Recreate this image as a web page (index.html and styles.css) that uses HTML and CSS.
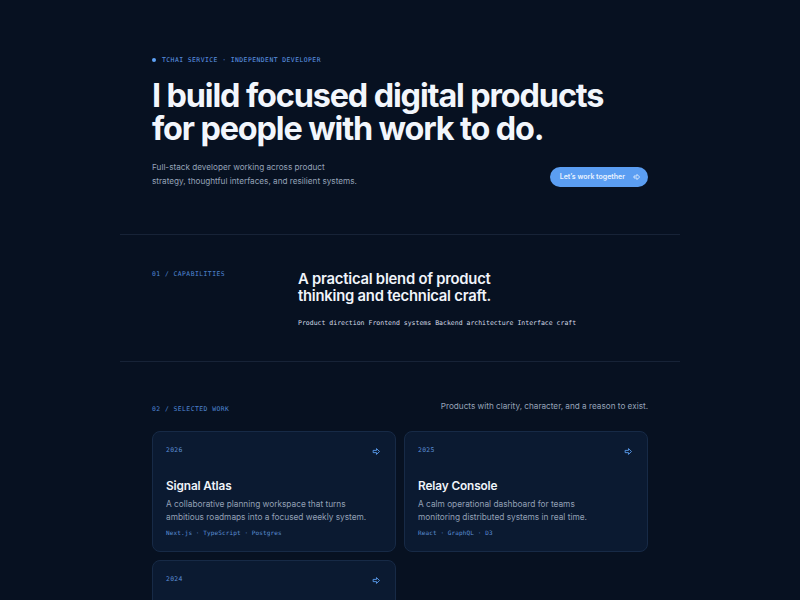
FILE: index.html
```html
<!DOCTYPE html>
<html lang="en">
<head>
<meta charset="utf-8">
<title>Tchai Service</title>
<link rel="stylesheet" href="styles.css">
</head>
<body>
<main class="page">
  <section class="hero">
    <div class="eyebrow"><span class="dot"></span>TCHAI SERVICE · INDEPENDENT DEVELOPER</div>
    <h1 class="headline">I build focused digital products<br>for people with work to do.</h1>
    <div class="hero-row">
      <p class="lede">Full-stack developer working across product<br>strategy, thoughtful interfaces, and resilient systems.</p>
      <a class="cta" href="#">Let’s work together
        <svg class="arrow" viewBox="0 0 16 16"><path d="M2 6h6V2.8L13.2 8 8 13.2V10H2z"/></svg>
      </a>
    </div>
  </section>

  <section class="caps">
    <div class="label">01 / CAPABILITIES</div>
    <div class="caps-body">
      <h2 class="caps-title">A practical blend of product<br>thinking and technical craft.</h2>
      <ul class="tags">
        <li>Product direction</li>
        <li>Frontend systems</li>
        <li>Backend architecture</li>
        <li>Interface craft</li>
      </ul>
    </div>
  </section>

  <section class="work">
    <div class="work-head">
      <div class="label">02 / SELECTED WORK</div>
      <p class="work-note">Products with clarity, character, and a reason to exist.</p>
    </div>
    <div class="cards">
      <article class="card">
        <div class="card-top"><span class="year">2026</span><svg class="arrow card-arrow" viewBox="0 0 16 16"><path d="M2 6h6V2.8L13.2 8 8 13.2V10H2z"/></svg></div>
        <h3 class="card-title">Signal Atlas</h3>
        <p class="card-desc">A collaborative planning workspace that turns ambitious roadmaps into a focused weekly system.</p>
        <div class="stack">Next.js · TypeScript · Postgres</div>
      </article>
      <article class="card">
        <div class="card-top"><span class="year">2025</span><svg class="arrow card-arrow" viewBox="0 0 16 16"><path d="M2 6h6V2.8L13.2 8 8 13.2V10H2z"/></svg></div>
        <h3 class="card-title">Relay Console</h3>
        <p class="card-desc">A calm operational dashboard for teams monitoring distributed systems in real time.</p>
        <div class="stack">React · GraphQL · D3</div>
      </article>
      <article class="card">
        <div class="card-top"><span class="year">2024</span><svg class="arrow card-arrow" viewBox="0 0 16 16"><path d="M2 6h6V2.8L13.2 8 8 13.2V10H2z"/></svg></div>
        <h3 class="card-title">Quiet Ledger</h3>
        <p class="card-desc">A lightweight finance tool for small studios that keeps every number honest.</p>
        <div class="stack">SvelteKit · Go · SQLite</div>
      </article>
    </div>
  </section>
</main>
</body>
</html>
```

FILE: styles.css
```css
* { box-sizing: border-box; }
html, body { margin: 0; padding: 0; }
body {
  background: #071121;
  color: #eef3fa;
  font-family: "Inter", "Open Sans", sans-serif;
  -webkit-font-smoothing: antialiased;
}
.page {
  width: 560px;
  margin: 0 auto;
}
.hero {
  padding: 55px 32px 46px;
  border-bottom: 1px solid #172337;
}
.eyebrow {
  display: flex;
  align-items: center;
  gap: 6px;
  font-family: "DejaVu Sans Mono", "Liberation Mono", monospace;
  font-size: 6.4px;
  letter-spacing: 0.07em;
  color: #5e98e8;
  line-height: 10px;
}
.dot {
  width: 4px;
  height: 4px;
  border-radius: 50%;
  background: #5ea2f6;
}
.headline {
  margin: 14px 0 0;
  font-size: 32.4px;
  line-height: 33px;
  font-weight: 700;
  letter-spacing: -0.035em;
  color: #f2f6fc;
}
.hero-row {
  margin-top: 15px;
  display: flex;
  align-items: center;
  justify-content: space-between;
}
.lede {
  margin: 0;
  font-size: 8.2px;
  line-height: 14px;
  color: #96a3b8;
}
.cta {
  display: flex;
  align-items: center;
  gap: 8px;
  height: 20px;
  margin-top: 5px;
  padding: 0 7px 0 10px;
  border-radius: 10px;
  background: #5b9ef2;
  color: #eaf3ff;
  font-size: 7px;
  font-weight: 600;
  text-decoration: none;
}
.arrow {
  width: 8px;
  height: 8px;
  fill: none;
  stroke: currentColor;
  stroke-width: 1.6;
  stroke-linejoin: round;
}
.caps {
  display: grid;
  grid-template-columns: 146px 1fr;
  padding: 34px 32px 33px;
  border-bottom: 1px solid #172337;
}
.label {
  font-family: "DejaVu Sans Mono", "Liberation Mono", monospace;
  font-size: 6.4px;
  letter-spacing: 0.07em;
  line-height: 10px;
  color: #4f86d4;
}
.caps-title {
  margin: 2px 0 0;
  font-size: 14.8px;
  line-height: 17px;
  font-weight: 600;
  letter-spacing: -0.015em;
  color: #f0f4fa;
}
.tags {
  list-style: none;
  margin: 13px 0 0;
  padding: 0;
  display: flex;
  gap: 4px;
  font-family: "DejaVu Sans Mono", "Liberation Mono", monospace;
  font-size: 6.5px;
  line-height: 10px;
  color: #d3dbe6;
}
.work {
  padding: 36px 32px 0;
}
.work-head {
  display: flex;
  justify-content: space-between;
  align-items: center;
}
.work-head .label { margin-top: 6px; }
.work-note {
  margin: 0;
  font-size: 8.2px;
  line-height: 12px;
  color: #96a3b8;
}
.cards {
  margin-top: 17px;
  display: grid;
  grid-template-columns: 1fr 1fr;
  gap: 8px;
}
.card {
  background: #0b1a31;
  border: 1px solid #172a46;
  border-radius: 8px;
  padding: 12px 13px 13px;
}
.card-top {
  display: flex;
  justify-content: space-between;
  align-items: center;
  height: 12px;
}
.year {
  font-family: "DejaVu Sans Mono", "Liberation Mono", monospace;
  font-size: 6.4px;
  letter-spacing: 0.05em;
  color: #5b8fd6;
}
.card-arrow {
  color: #5b9ef2;
  width: 9px;
  height: 9px;
  margin-right: 1px;
  margin-top: 3px;
}
.card-title {
  margin: 22px 0 0;
  font-size: 11.8px;
  line-height: 16px;
  font-weight: 600;
  letter-spacing: -0.01em;
  color: #f0f4fa;
}
.card-desc {
  margin: 4px 0 0;
  max-width: 200.6px;
  font-size: 8.3px;
  line-height: 13px;
  color: #93a0b5;
}
.stack {
  margin-top: 4px;
  font-family: "DejaVu Sans Mono", "Liberation Mono", monospace;
  font-size: 6px;
  letter-spacing: 0.02em;
  line-height: 10px;
  color: #5b8fd6;
}
```
